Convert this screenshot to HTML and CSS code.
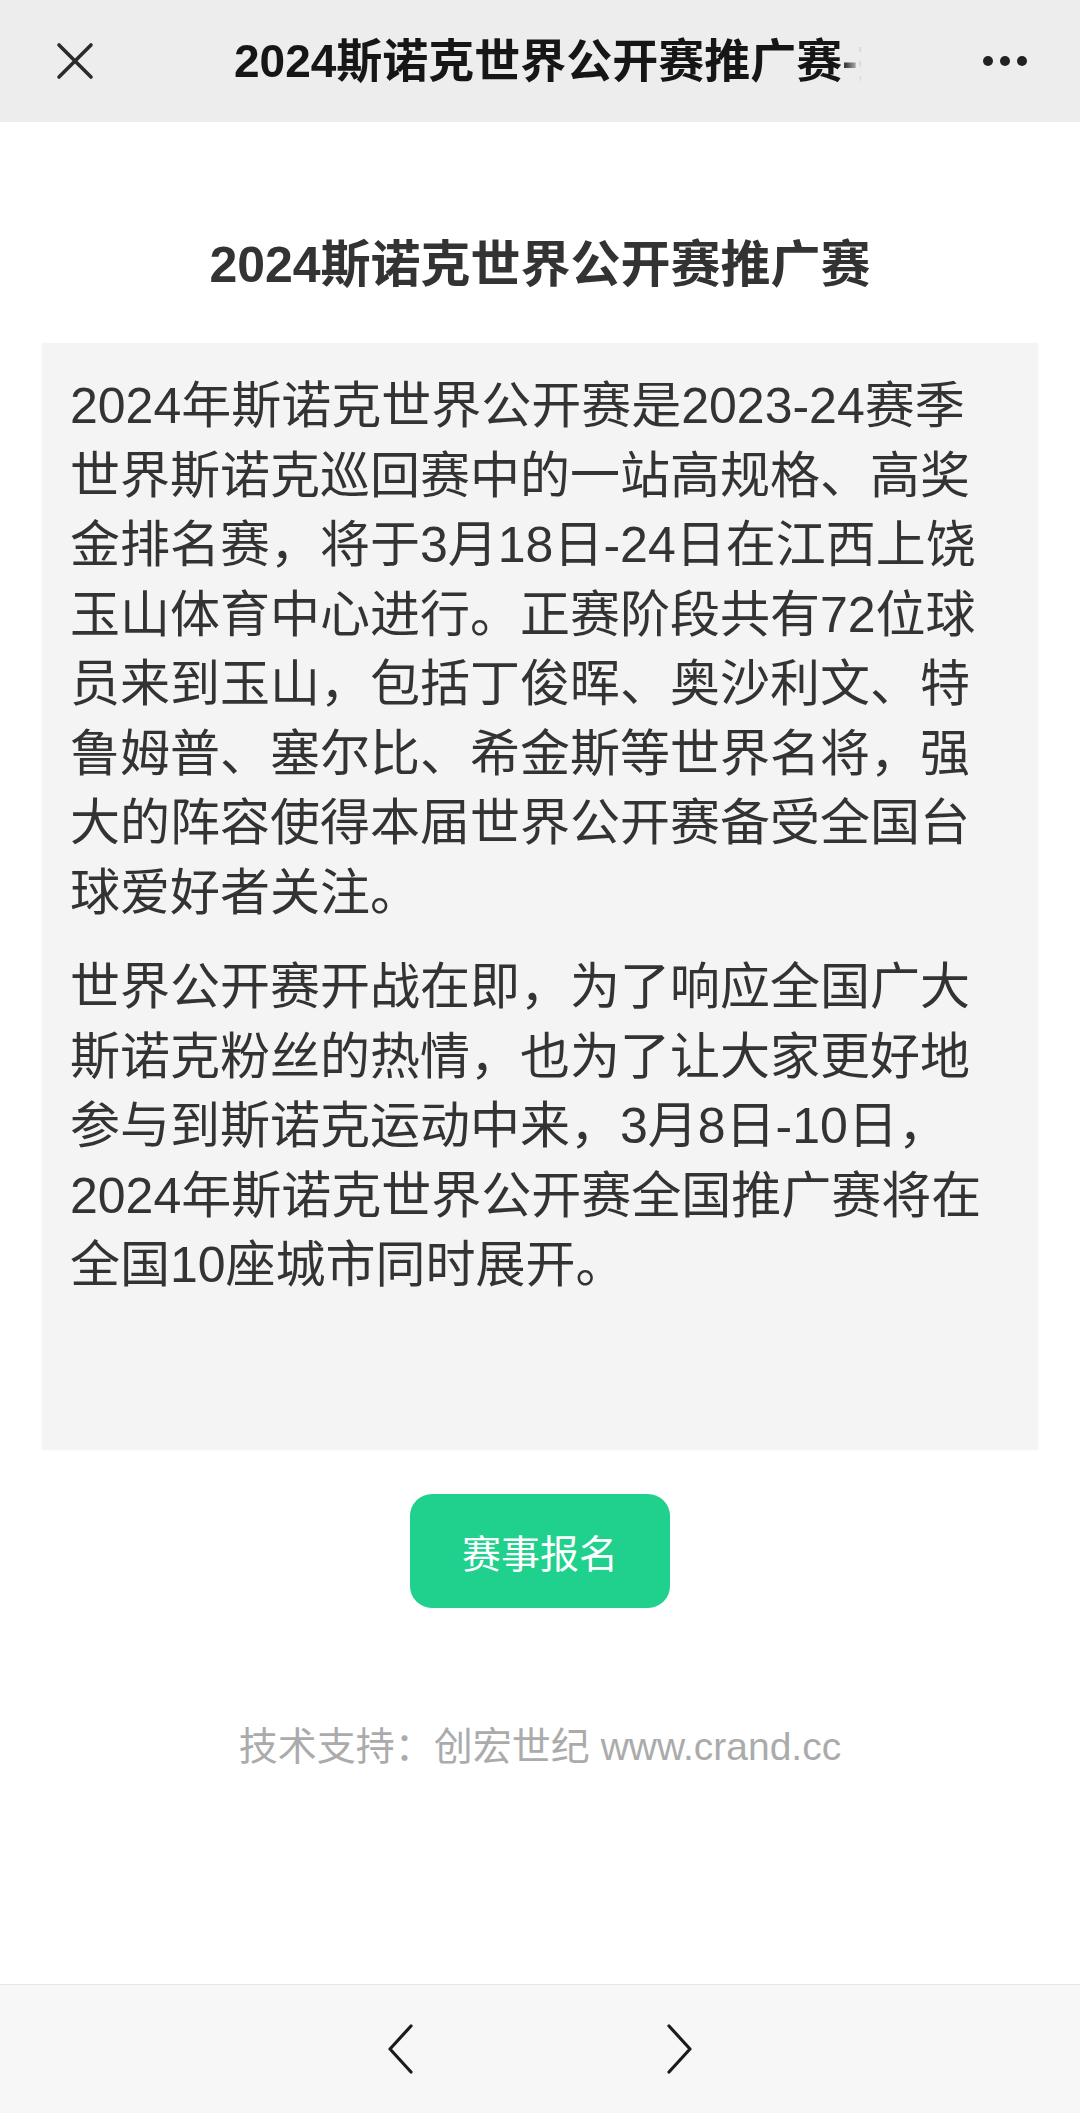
FILE: index.html
```html
<!DOCTYPE html>
<html lang="zh-CN">
<head>
<meta charset="utf-8">
<title>2024斯诺克世界公开赛推广赛</title>
<link rel="stylesheet" href="styles.css">
</head>
<body>
<div class="page">
  <header class="topbar">
    <div class="close">
      <svg width="38" height="38" viewBox="0 0 38 38"><path d="M3 3 L35 35 M35 3 L3 35" stroke="#2b2b2b" stroke-width="3.6" stroke-linecap="round" fill="none"/></svg>
    </div>
    <div class="bar-title"><span>2024斯诺克世界公开赛推广赛-报名</span></div>
    <div class="more"><i></i><i></i><i></i></div>
  </header>

  <h1 class="heading">2024斯诺克世界公开赛推广赛</h1>

  <section class="intro">
    <p>2024年斯诺克世界公开赛是2023-24赛季世界斯诺克巡回赛中的一站高规格、高奖金排名赛，将于3月18日-24日在江西上饶玉山体育中心进行。正赛阶段共有72位球员来到玉山，包括丁俊晖、奥沙利文、特鲁姆普、塞尔比、希金斯等世界名将，强大的阵容使得本届世界公开赛备受全国台球爱好者关注。</p>
    <p>世界公开赛开战在即，为了响应全国广大斯诺克粉丝的热情，也为了让大家更好地参与到斯诺克运动中来，3月8日-10日，2024年斯诺克世界公开赛全国推广赛将在全国10座城市同时展开。</p>
  </section>

  <div class="actions">
    <a class="signup">赛事报名</a>
  </div>

  <p class="credit">技术支持：创宏世纪 www.crand.cc</p>

  <footer class="toolbar">
    <svg width="28" height="52" viewBox="0 0 28 52"><path d="M25 3 L4 26 L25 49" stroke="#1c1c1c" stroke-width="3.2" stroke-linecap="round" stroke-linejoin="round" fill="none"/></svg>
    <svg width="28" height="52" viewBox="0 0 28 52"><path d="M3 3 L24 26 L3 49" stroke="#1c1c1c" stroke-width="3.2" stroke-linecap="round" stroke-linejoin="round" fill="none"/></svg>
  </footer>
</div>
</body>
</html>
```

FILE: styles.css
```css
* {
  box-sizing: border-box;
}

html, body {
  margin: 0;
  padding: 0;
  background: #ffffff;
}

body {
  font-family: "Liberation Sans", "Noto Sans CJK SC", sans-serif;
  color: #333333;
}

.page {
  min-height: 100vh;
  display: flex;
  flex-direction: column;
}

.topbar {
  height: 122px;
  background: #ededed;
  display: flex;
  align-items: center;
  flex-shrink: 0;
}

.close {
  width: 150px;
  display: flex;
  justify-content: center;
  align-items: center;
}

.close svg {
  display: block;
}

.bar-title {
  margin-left: 84px;
  width: 628px;
  overflow: hidden;
  white-space: nowrap;
  font-size: 46px;
  font-weight: 700;
  color: #161616;
  line-height: 60px;
  -webkit-mask-image: linear-gradient(to right, #000 0, #000 calc(100% - 20px), transparent 100%);
  mask-image: linear-gradient(to right, #000 0, #000 calc(100% - 20px), transparent 100%);
}

.more {
  margin-left: auto;
  width: 150px;
  display: flex;
  justify-content: center;
  align-items: center;
  gap: 7px;
}

.more i {
  display: block;
  width: 10px;
  height: 10px;
  border-radius: 50%;
  background: #222222;
}

.heading {
  margin: 105px 0 0;
  font-size: 50px;
  line-height: 76px;
  font-weight: 700;
  text-align: center;
  color: #333333;
}

.intro {
  margin: 40px 42px 0;
  background: #f4f4f4;
  padding: 29px 32px 148px 28px;
  box-shadow: 0 1px 2px rgba(0, 0, 0, 0.06);
}

.intro p {
  margin: 0;
  font-size: 50px;
  line-height: 69.5px;
  color: #333333;
}

.intro p + p {
  margin-top: 25px;
}

.actions {
  margin-top: 45px;
  display: flex;
  justify-content: center;
}

.signup {
  width: 260px;
  height: 114px;
  border-radius: 22px;
  background: #1fd18c;
  color: #ffffff;
  font-size: 39px;
  display: flex;
  align-items: center;
  justify-content: center;
  text-decoration: none;
}

.credit {
  margin: 111px 0 0;
  text-align: center;
  font-size: 39px;
  line-height: 56px;
  color: #ababab;
}

.toolbar {
  margin-top: auto;
  height: 129px;
  background: #f7f7f7;
  border-top: 1px solid #e6e6e6;
  display: flex;
  justify-content: center;
  align-items: center;
  gap: 252px;
  flex-shrink: 0;
}

.toolbar svg {
  display: block;
}
```
